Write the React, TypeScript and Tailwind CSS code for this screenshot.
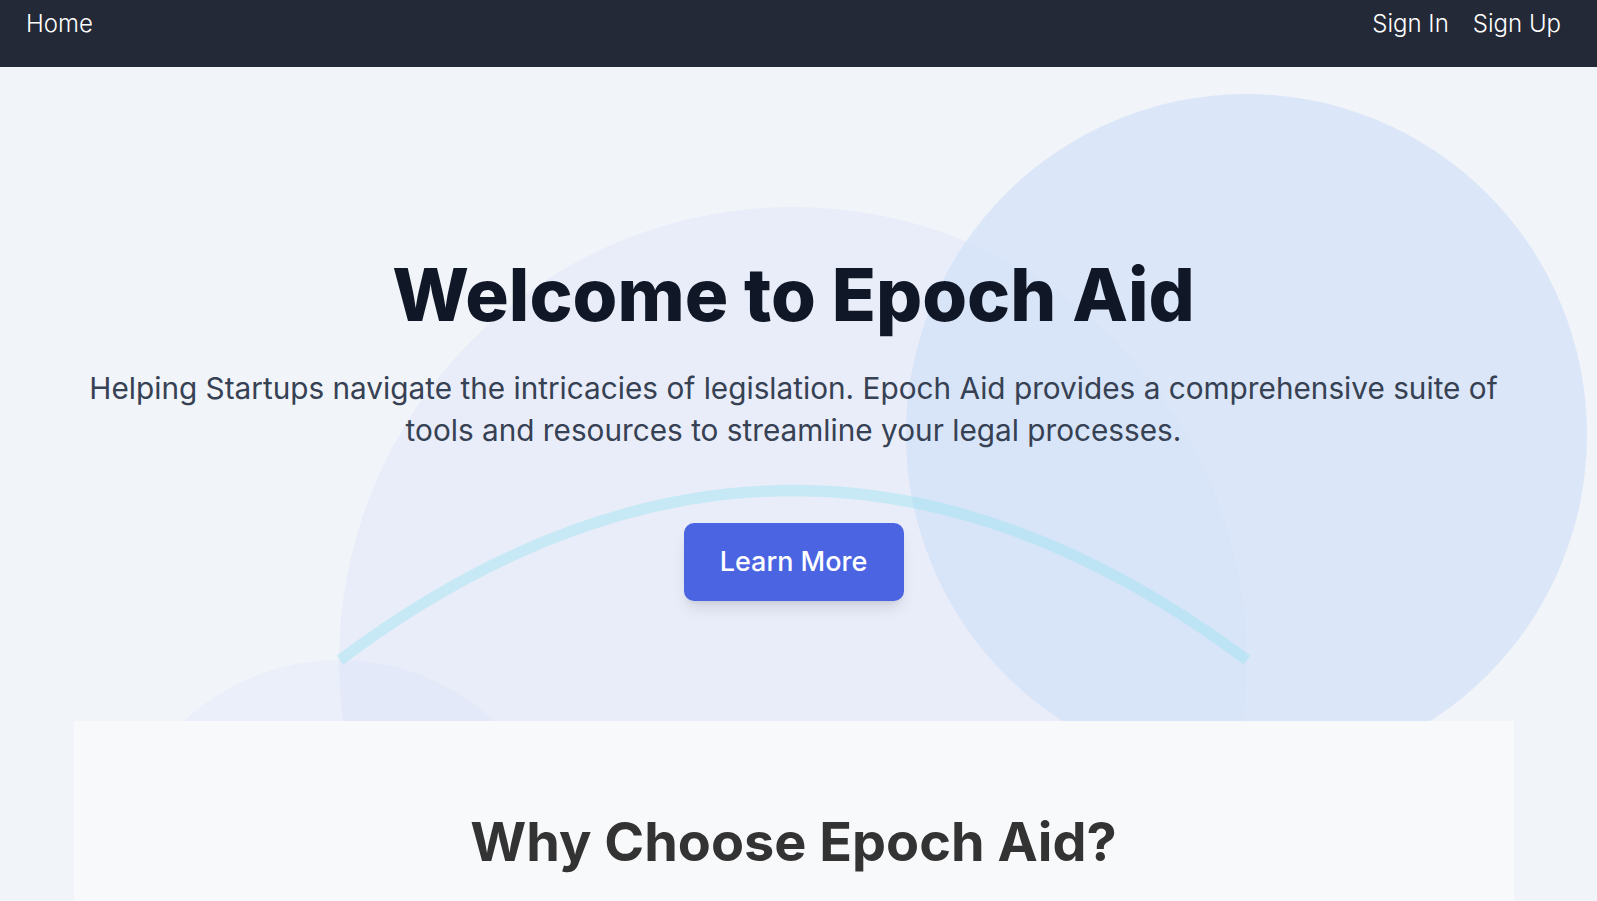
export default function App() {
  return (
    <div className="h-[901px] overflow-hidden bg-[#f1f4f9] font-[Inter,sans-serif]">
      <nav className="h-[67px] bg-[#232937]">
        <div className="flex w-[1587px] items-start justify-between pt-2 pr-[26px] pl-[26px] text-2xl font-light text-white">
          <a href="#">Home</a>
          <div className="flex gap-6">
            <a href="#">Sign In</a>
            <a href="#">Sign Up</a>
          </div>
        </div>
      </nav>

      <main className="relative w-[1587px]">
        {/* background decorations */}
        <div className="absolute left-[339px] top-[140px] h-[908px] w-[908px] rounded-full bg-[#e9edf9]" />
        <div className="absolute left-[906px] top-[27px] h-[681px] w-[681px] rounded-full bg-[#cfdff8]/65" />
        <div className="absolute left-[112px] top-[593px] h-[454px] w-[454px] rounded-full bg-[#cbd5f9]/15" />
        <svg
          className="absolute left-[339px] top-[413px] overflow-visible"
          width="908"
          height="200"
          viewBox="0 0 908 200"
          fill="none">
          <path
            d="M1 180 Q454 -159 908 180"
            stroke="rgba(157,228,240,0.46)"
            strokeWidth="11"
          />
        </svg>

        <section className="relative flex flex-col items-center pt-[192px] text-center">
          <h1 className="mb-9 text-[72.5px] leading-[72px] font-extrabold text-gray-900">
            Welcome to Epoch Aid
          </h1>
          <p className="w-[1440px] text-[29.75px] leading-[42px] text-gray-700">
            Helping Startups navigate the intricacies of legislation. Epoch Aid
            provides a comprehensive suite of tools and resources to streamline
            your legal processes.
          </p>
          <button className="mt-18 h-[78px] w-[220px] rounded-[10px] bg-[#4a64e2] text-[27px] font-medium text-white shadow-lg">
            Learn More
          </button>
        </section>

        <section className="relative mx-auto mt-[120px] h-[300px] w-[1440px] bg-[#f8f9fb] pt-[86px] text-center">
          <h2 className="text-[54px] leading-[70px] font-bold text-[#333333]">
            Why Choose Epoch Aid?
          </h2>
        </section>
      </main>
    </div>
  );
}
